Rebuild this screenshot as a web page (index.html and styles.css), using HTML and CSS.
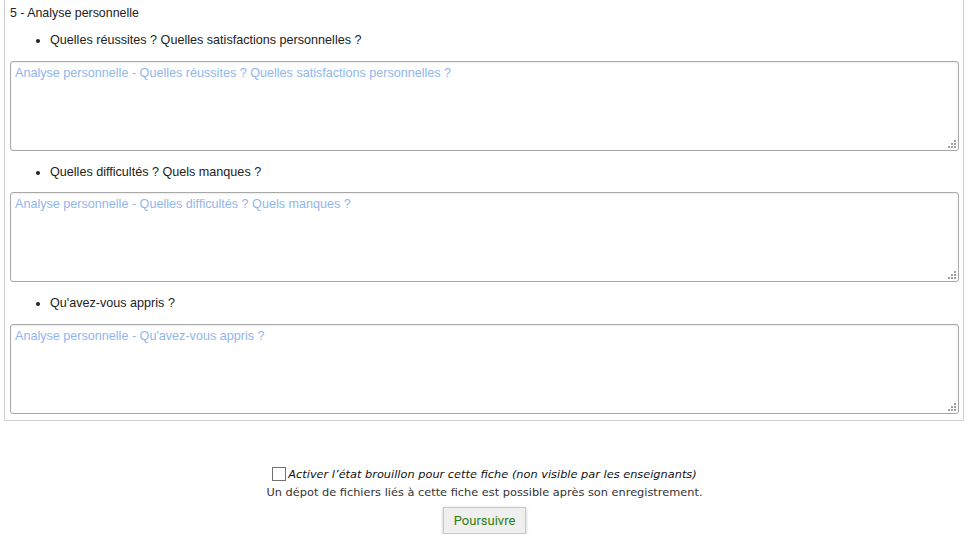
FILE: index.html
```html
<!DOCTYPE html>
<html lang="fr">
<head>
<meta charset="utf-8">
<title>Analyse personnelle</title>
<link rel="stylesheet" href="styles.css">
</head>
<body>
<div class="section">
  <div class="section-title">5 - Analyse personnelle</div>
  <ul class="question"><li>Quelles réussites ? Quelles satisfactions personnelles ?</li></ul>
  <div class="field">
    <textarea class="answer" placeholder="Analyse personnelle - Quelles réussites ? Quelles satisfactions personnelles ?"></textarea>
    <span class="grip"><i></i><i></i><i></i><i></i><i></i><i></i></span>
  </div>
  <ul class="question"><li>Quelles difficultés ? Quels manques ?</li></ul>
  <div class="field">
    <textarea class="answer" placeholder="Analyse personnelle - Quelles difficultés ? Quels manques ?"></textarea>
    <span class="grip"><i></i><i></i><i></i><i></i><i></i><i></i></span>
  </div>
  <ul class="question question-last"><li>Qu'avez-vous appris ?</li></ul>
  <div class="field">
    <textarea class="answer" placeholder="Analyse personnelle - Qu'avez-vous appris ?"></textarea>
    <span class="grip"><i></i><i></i><i></i><i></i><i></i><i></i></span>
  </div>
</div>
<div class="footer">
  <label class="draft"><input type="checkbox" class="draft-box"><em>Activer l’état brouillon pour cette fiche (non visible par les enseignants)</em></label>
  <div class="note">Un dépot de fichiers liés à cette fiche est possible après son enregistrement.</div>
  <button class="submit" type="button">Poursuivre</button>
</div>
</body>
</html>
```
FILE: styles.css
```css
html, body {
  margin: 0;
  padding: 0;
  background: #fff;
}
body {
  font-family: "Liberation Sans", Arial, sans-serif;
  font-size: 12px;
  color: #222;
}
.section {
  margin-left: 4px;
  width: 948px;
  border: 1px solid #cfcfcf;
  border-top: none;
  padding: 5px 5px 6px 5px;
}
.section-title {
  line-height: 16px;
  font-size: 12.4px;
}
.question {
  margin: 11px 0 13px 0;
  padding-left: 40px;
  line-height: 16px;
  font-size: 12.6px;
}
.field {
  position: relative;
  width: 949px;
}
.answer {
  display: block;
  box-sizing: border-box;
  width: 949px;
  height: 90px;
  margin: 0;
  padding: 4px;
  border: 1px solid #a8a8a8;
  border-radius: 3px;
  box-shadow: inset 0 1px 2px rgba(0,0,0,0.08);
  font-family: "Liberation Sans", Arial, sans-serif;
  font-size: 12.6px;
  color: #222;
  resize: none;
  outline: none;
}
.answer::placeholder {
  color: #8fb6ee;
}
.field + .question {
  margin-top: 13px;
  margin-bottom: 12px;
}
.field + .question-last {
  margin-bottom: 13px;
}
.grip {
  position: absolute;
  right: 3px;
  bottom: 3px;
  width: 8px;
  height: 8px;
}
.grip i {
  position: absolute;
  width: 2px;
  height: 2px;
  background: #a0a0a0;
}
.grip i:nth-child(1) { right: 0; top: 0; }
.grip i:nth-child(2) { right: 0; top: 3px; }
.grip i:nth-child(3) { right: 3px; top: 3px; }
.grip i:nth-child(4) { right: 0; top: 6px; }
.grip i:nth-child(5) { right: 3px; top: 6px; }
.grip i:nth-child(6) { right: 6px; top: 6px; }
.footer {
  margin-top: 45px;
  text-align: center;
  font-family: "DejaVu Sans", Verdana, sans-serif;
  font-size: 11.35px;
  color: #333;
}
.draft {
  display: inline-flex;
  align-items: center;
  color: #111;
  line-height: 16px;
}
.draft-box {
  appearance: none;
  -webkit-appearance: none;
  width: 14px;
  height: 14px;
  margin: 0 2px 0 0;
  border: 1px solid #707070;
  background: #fff;
}
.note {
  line-height: 16px;
  margin-top: 0;
}
.submit {
  margin-top: 7px;
  width: 83px;
  height: 27px;
  background: #efefef;
  border: 1px solid #c8c8c8;
  box-shadow: 0 1px 3px rgba(0,0,0,0.25);
  font-family: Roboto, "Open Sans", sans-serif;
  font-size: 13px;
  color: #2e7d14;
  padding: 0;
}
```
